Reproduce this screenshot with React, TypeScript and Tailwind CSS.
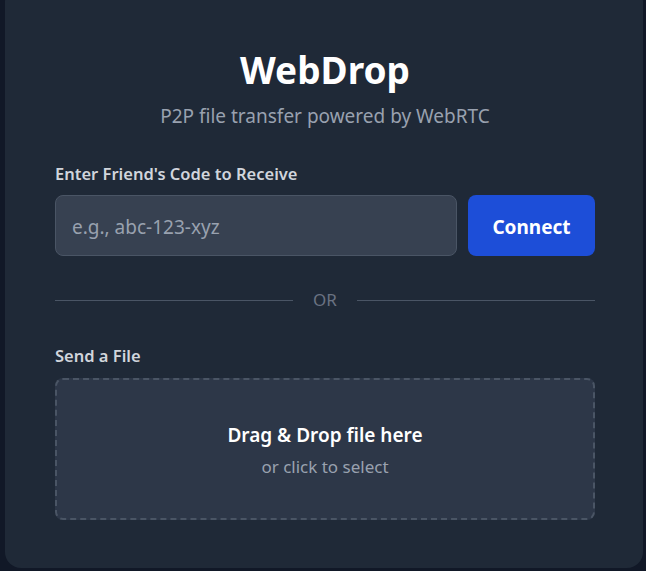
export default function App() {
  return (
    <div
      className="min-h-screen overflow-hidden bg-[#111827]"
      style={{ fontFamily: '"Noto Sans", "Open Sans", sans-serif' }}
    >
      <div className="-mt-[14px] ml-[5px] w-[638px] rounded-2xl bg-[#1f2937] pb-12 pl-[50px] pr-[48px] pt-16">
        {/* Header */}
        <h1 className="text-center text-[37px] leading-10 font-bold text-white">WebDrop</h1>
        <p className="mt-3 text-center text-[19px] leading-7 text-gray-400">
          P2P file transfer powered by WebRTC
        </p>

        {/* Receive */}
        <label className="mt-8 mb-[9px] block text-[16.5px] leading-6 font-semibold text-gray-300">
          Enter Friend's Code to Receive
        </label>
        <div className="flex gap-[11px]">
          <input
            type="text"
            placeholder="e.g., abc-123-xyz"
            className="h-[61px] flex-1 rounded-lg border border-gray-600 bg-[#374151] px-4 pt-[2px] text-[19px] text-white placeholder:text-gray-400 focus:outline-none"
          />
          <button className="h-[61px] w-[127px] rounded-lg bg-[#1d4ed8] pt-[3px] text-[19px] font-bold text-white">
            Connect
          </button>
        </div>

        {/* Divider */}
        <div className="my-8 flex items-center">
          <div className="h-px flex-1 bg-gray-600" />
          <span className="px-5 text-[17px] leading-6 text-gray-500">OR</span>
          <div className="h-px flex-1 bg-gray-600" />
        </div>

        {/* Send */}
        <label className="mb-[10px] block text-[16.5px] leading-6 font-semibold text-gray-300">
          Send a File
        </label>
        <div className="flex h-[142px] cursor-pointer flex-col items-center justify-center rounded-lg border-2 border-dashed border-gray-600 bg-[#2d3748] pt-[2px]">
          <p className="text-[19px] leading-7 font-semibold text-white">Drag &amp; Drop file here</p>
          <p className="mt-[6px] text-[17px] leading-6 text-gray-400">or click to select</p>
        </div>
      </div>
    </div>
  );
}
